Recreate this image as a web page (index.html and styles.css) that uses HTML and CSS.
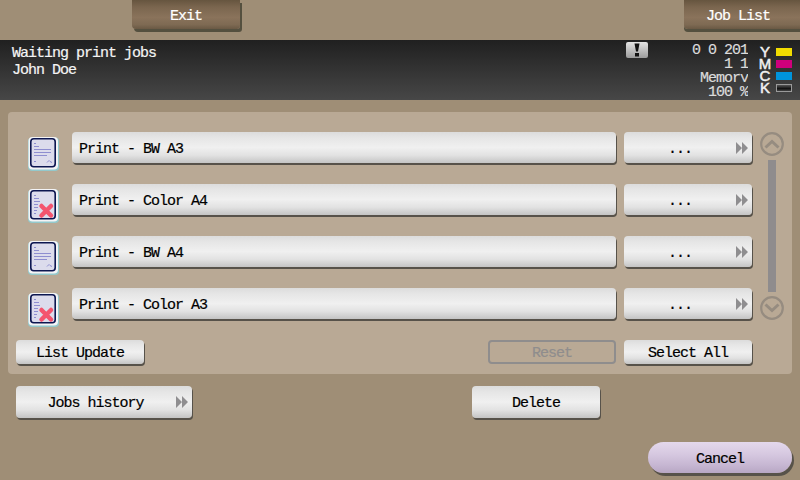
FILE: index.html
```html
<!DOCTYPE html>
<html lang="en">
<head>
<meta charset="utf-8">
<title>Job List</title>
<link rel="stylesheet" href="styles.css">
</head>
<body>
<svg class="defs" width="0" height="0" aria-hidden="true">
  <defs>
    <symbol id="ff" viewBox="0 0 12 12"><path d="M0 0 L6 6 L0 12Z M6 0 L12 6 L6 12Z" fill="#8f8e90"/></symbol>
    <symbol id="doc" viewBox="0 0 31 34">
      <rect x="0" y="0.500" width="31" height="33.500" rx="4" fill="#93c9cc"/>
      <rect x="0.500" y="0" width="29.500" height="32.500" rx="4" fill="#f4f4f6"/>
      <rect x="2.800" y="1.800" width="24.400" height="28" rx="3" fill="#dcdcec" stroke="#0c1650" stroke-width="1.600"/>
      <g stroke="#8e8ed0" stroke-width="1" fill="none">
        <path d="M6 6.500h2M6 9.500h5M6 12.500h17M6 15.500h17M6 18.500h13M6 24.500h2M19 25.500l2-2 1 1 2 1"/>
      </g>
    </symbol>
    <symbol id="docx" viewBox="0 0 31 34">
      <rect x="0" y="0.500" width="31" height="33.500" rx="4" fill="#93c9cc"/>
      <rect x="0.500" y="0" width="29.500" height="32.500" rx="4" fill="#f4f4f6"/>
      <rect x="2.800" y="1.800" width="24.400" height="28" rx="3" fill="#dcdcec" stroke="#0c1650" stroke-width="1.600"/>
      <g stroke="#8e8ed0" stroke-width="1" fill="none">
        <path d="M6 6.500h2M6 9.500h5M6 12.500h6M6 15.500h4M6 18.500h4M6 21.500h3M6 24.500h2"/>
      </g>
      <path d="M13.500 17 L23 26.500 M23 17 L13.500 26.500" stroke="#f4546e" stroke-width="4.500" stroke-linecap="round"/>
    </symbol>
    <symbol id="up" viewBox="0 0 24 24"><circle cx="12" cy="12" r="10.800" fill="none" stroke="#968c80" stroke-width="2.200"/><path d="M5.500 15.500 L12 9.500 L18.500 15.500" fill="none" stroke="#968c80" stroke-width="3"/></symbol>
    <symbol id="down" viewBox="0 0 24 24"><circle cx="12" cy="12" r="10.800" fill="none" stroke="#968c80" stroke-width="2.200"/><path d="M5.500 8.500 L12 14.500 L18.500 8.500" fill="none" stroke="#968c80" stroke-width="3"/></symbol>
  </defs>
</svg>

<header class="topbar">
  <button class="btn-dark btn-exit">Exit</button>
  <button class="btn-dark btn-joblist">Job List</button>
</header>

<section class="status">
  <div class="status-msg">
    <div>Waiting print jobs</div>
    <div>John Doe</div>
  </div>
  <div class="alert">
    <svg width="10" height="14" viewBox="0 0 10 14"><path d="M2.500 0.500h5l-1.500 8h-2z M3 10h4v3.500h-4z" fill="#111"/></svg>
  </div>
  <div class="meter">
    <div class="meter-line">0 0 201</div>
    <div class="meter-line">1 1</div>
    <div class="meter-line">Memory</div>
    <div class="meter-line">100 %</div>
  </div>
  <div class="toner">
    <div class="toner-row"><span class="toner-key">Y</span><span class="swatch swatch-y"></span></div>
    <div class="toner-row"><span class="toner-key">M</span><span class="swatch swatch-m"></span></div>
    <div class="toner-row"><span class="toner-key">C</span><span class="swatch swatch-c"></span></div>
    <div class="toner-row"><span class="toner-key">K</span><span class="swatch swatch-k"></span></div>
  </div>
</section>

<main class="panel">
  <div class="rows">
    <div class="row">
      <svg class="job-icon"><use href="#doc"/></svg>
      <button class="btn btn-job">Print - BW A3</button>
      <button class="btn btn-more"><span class="more-label">...</span><svg class="ff"><use href="#ff"/></svg></button>
    </div>
    <div class="row">
      <svg class="job-icon"><use href="#docx"/></svg>
      <button class="btn btn-job">Print - Color A4</button>
      <button class="btn btn-more"><span class="more-label">...</span><svg class="ff"><use href="#ff"/></svg></button>
    </div>
    <div class="row">
      <svg class="job-icon"><use href="#doc"/></svg>
      <button class="btn btn-job">Print - BW A4</button>
      <button class="btn btn-more"><span class="more-label">...</span><svg class="ff"><use href="#ff"/></svg></button>
    </div>
    <div class="row">
      <svg class="job-icon"><use href="#docx"/></svg>
      <button class="btn btn-job">Print - Color A3</button>
      <button class="btn btn-more"><span class="more-label">...</span><svg class="ff"><use href="#ff"/></svg></button>
    </div>
  </div>
  <div class="scroller">
    <svg class="scroll-btn"><use href="#up"/></svg>
    <div class="scroll-bar"></div>
    <svg class="scroll-btn"><use href="#down"/></svg>
  </div>
  <div class="panel-foot">
    <button class="btn btn-small">List Update</button>
    <button class="btn-reset">Reset</button>
    <button class="btn btn-small">Select All</button>
  </div>
</main>

<div class="actions">
  <button class="btn btn-history"><span class="history-label">Jobs history</span><svg class="ff"><use href="#ff"/></svg></button>
  <button class="btn btn-delete">Delete</button>
</div>

<footer class="foot">
  <button class="btn-cancel">Cancel</button>
</footer>
</body>
</html>
```
FILE: styles.css
```css
* { box-sizing: border-box; }
html, body { margin: 0; padding: 0; }
body {
  width: 800px;
  height: 480px;
  overflow: hidden;
  display: flex;
  flex-direction: column;
  background: #9f8e76;
  font-family: "Liberation Mono", monospace;
  font-size: 15px;
  letter-spacing: -1px;
  -webkit-text-stroke: 0.2px currentColor;
  color: #000;
}
.defs { position: absolute; }
button {
  font: inherit;
  letter-spacing: inherit;
  color: inherit;
  border: 0;
  padding: 2px 0 0;
  margin: 0;
  display: flex;
  align-items: center;
  justify-content: center;
}

.topbar {
  height: 40px;
  flex: none;
  display: flex;
  justify-content: space-between;
  align-items: flex-start;
  padding-left: 132px;
}
.btn-dark {
  height: 29px;
  padding-top: 3px;
  color: #fff;
  background: linear-gradient(#66553f 0, #7b664f 25%, #8a735b 60%, #7e6a53 85%, #6a5944 100%);
  box-shadow: 2px 3px 0 #54503f;
  border-radius: 0 0 0 4px;
}
.btn-exit { width: 108px; border-radius: 0 0 3px 4px; }
.btn-joblist { width: 116px; padding-right: 8px; box-shadow: 0 3px 0 #54503f; }

.status {
  height: 60px;
  flex: none;
  display: flex;
  color: #f4f4f4;
  background: linear-gradient(#202020, #474747);
  padding: 4px 8px 0 12px;
}
.status-msg { flex: 1; line-height: 17px; padding-top: 1px; }
.alert {
  width: 22px;
  height: 16px;
  margin-top: -2px;
  border-radius: 2px;
  background: linear-gradient(#e4e4e4, #9c9c9c);
  display: flex;
  align-items: center;
  justify-content: center;
}
.meter {
  width: 100px;
  text-align: right;
  color: #dcdcdc;
}
.meter-line {
  height: 10px;
  margin-bottom: 4px;
  overflow: hidden;
  line-height: 14px;
}
.toner { width: 34px; margin: 2px 0 0 10px; }
.toner-row {
  height: 12px;
  display: flex;
  align-items: center;
  justify-content: space-between;
}
.toner-key {
  font-family: "Liberation Sans", sans-serif;
  font-size: 15px;
  line-height: 12px;
  letter-spacing: 0;
  width: 14px;
  text-align: center;
  color: #f0f0f0;
  -webkit-text-stroke: 0.5px currentColor;
}
.swatch { width: 16px; height: 8px; }
.swatch-y { background: #f2dc00; }
.swatch-m { background: #d0007c; }
.swatch-c { background: #0094dc; }
.swatch-k { background: linear-gradient(#555, #111 60%, #444); border: 1px solid #9a9a9a; }

.panel {
  margin: 12px 8px 0;
  height: 262px;
  flex: none;
  padding: 20px 8px 8px;
  background: #b9a995;
  border-radius: 4px;
  display: grid;
  grid-template-columns: 737px 24px;
  column-gap: 7px;
  row-gap: 19px;
  align-content: start;
}
.rows { display: flex; flex-direction: column; gap: 19px; }
.row { height: 33px; display: flex; align-items: flex-start; }
.job-icon { width: 31px; height: 34px; margin: 5px 13px 0 12px; flex: none; overflow: visible; }

.btn {
  background: linear-gradient(#dcdcdc 0, #e6e6e6 20%, #f0f0f0 50%, #e2e2e2 75%, #c4c4c4 100%);
  box-shadow: 1px 2px 0 #57524a;
  border-radius: 4px;
  flex: none;
}
.btn-job {
  width: 544px;
  height: 31px;
  margin-right: 8px;
  padding: 3px 0 0 7px;
  justify-content: flex-start;
}
.btn-more { width: 128px; height: 31px; padding-top: 3px; position: relative; }
.more-label { margin-right: 16px; }
.ff { width: 12px; height: 12px; position: absolute; right: 4px; top: 10px; }

.scroller { display: flex; flex-direction: column; height: 189px; padding-bottom: 1px; }
.scroll-btn { width: 24px; height: 24px; flex: none; }
.scroll-bar { flex: 1; width: 8px; margin: 4px 8px; background: #8f8c8d; }

.panel-foot { display: flex; align-items: flex-start; }
.btn-small { width: 128px; height: 24px; }
.panel-foot .btn-small:first-child { margin-right: 344px; }
.btn-reset {
  width: 128px;
  height: 24px;
  margin-right: 8px;
  background: transparent;
  border: 2px solid #8f8d8d;
  border-radius: 4px;
  color: #8f8d8d;
}

.actions {
  flex: none;
  display: flex;
  align-items: flex-start;
  margin-top: 12px;
  padding-left: 16px;
  height: 34px;
}
.btn-history { width: 176px; height: 32px; margin-right: 280px; position: relative; }
.history-label { margin-right: 17px; }
.btn-delete { width: 128px; height: 32px; }

.foot { flex: none; margin-top: 22px; display: flex; justify-content: flex-end; padding-right: 8px; }
.btn-cancel {
  width: 144px;
  height: 31px;
  padding-top: 3px;
  border-radius: 16px;
  background: linear-gradient(#e4d8ec 0, #d6c8e0 40%, #c6b6d2 75%, #b8a7c4 100%);
  box-shadow: 2px 3px 0 #57524a;
}
```
